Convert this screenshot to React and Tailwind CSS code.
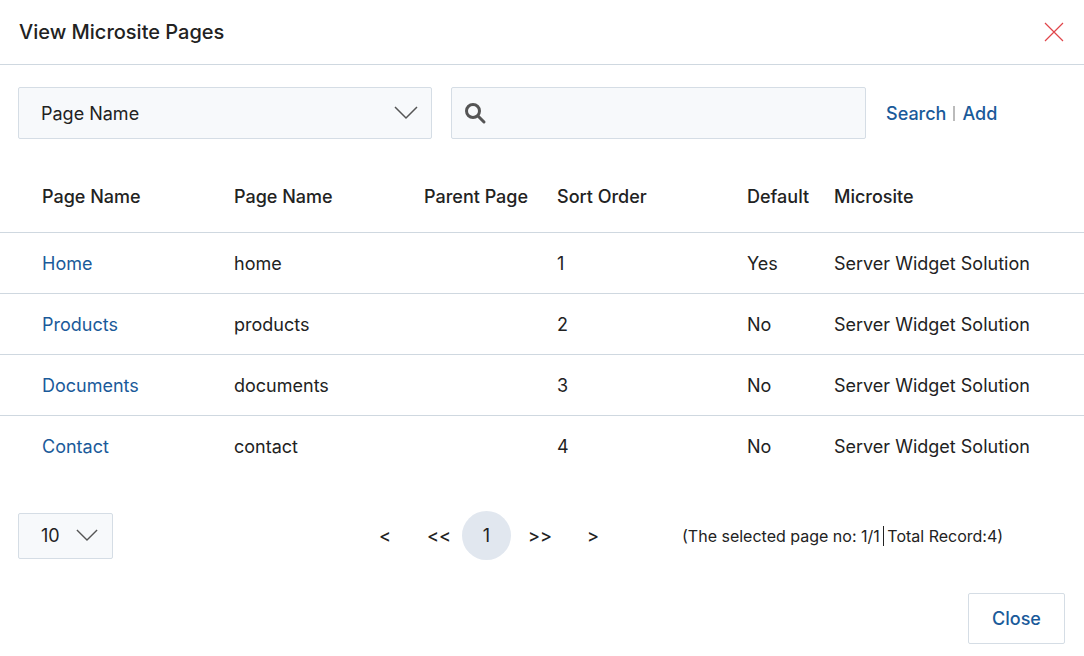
import React from "react";

const rows = [
  ["Home", "home", "1", "Yes"],
  ["Products", "products", "2", "No"],
  ["Documents", "documents", "3", "No"],
  ["Contact", "contact", "4", "No"],
];

const Chevron = ({ w = 24, h = 14 }) => (
  <svg width={w} height={h} viewBox="0 0 24 14" fill="none" stroke="#555" strokeWidth="1.5">
    <path d="M1 1l11 11L23 1" />
  </svg>
);

const grid = "grid grid-cols-[192px_190px_133px_190px_87px_1fr] pl-[42px] items-center";

export default function App() {
  return (
    <div className="w-[1084px] h-[656px] bg-white text-[#222] font-[family-name:Inter,sans-serif] flex flex-col">
      <div className="h-[65px] border-b border-[#cfd8e0] flex items-center justify-between pl-[19px] pr-[19px]">
        <span className="text-[20px] font-medium">View Microsite Pages</span>
        <svg width="22" height="22" viewBox="0 0 22 22" stroke="#e0454a" strokeWidth="1.2">
          <path d="M2 2l18 18M20 2L2 20" />
        </svg>
      </div>
      <div className="flex items-center mt-[22px] pl-[18px]">
        <div className="w-[414px] h-[52px] bg-[#f7f9fb] border border-[#d5dde5] rounded-[2px] flex items-center justify-between pl-[22px] pr-[13px] text-[18px]">
          <span>Page Name</span>
          <Chevron />
        </div>
        <div className="ml-[19px] w-[415px] h-[52px] bg-[#f7f9fb] border border-[#d5dde5] rounded-[2px] flex items-center pl-[11px]">
          <svg width="24" height="24" viewBox="0 0 24 24" fill="none" stroke="#555" strokeWidth="3">
            <circle cx="10" cy="10" r="6.5" />
            <path d="M15 15l6 6" strokeLinecap="round" />
          </svg>
        </div>
        <div className="ml-[20px] text-[18px] text-[#1a5a9a] font-medium flex items-center">
          <span>Search</span>
          <span className="mx-[7px] w-[2px] h-[15px] bg-[#bbb]"></span>
          <span>Add</span>
        </div>
      </div>
      <div className={grid + " h-[94px] pt-[22px] border-b border-[#cfd8e0] text-[18px] font-medium"}>
        <span>Page Name</span>
        <span>Page Name</span>
        <span>Parent Page</span>
        <span>Sort Order</span>
        <span>Default</span>
        <span>Microsite</span>
      </div>
      {rows.map((r, i) => (
        <div key={i} className={grid + " h-[61px] text-[18px]" + (i < 3 ? " border-b border-[#cfd8e0]" : "")}>
          <span className="text-[#1a5a9a]">{r[0]}</span>
          <span>{r[1]}</span>
          <span></span>
          <span>{r[2]}</span>
          <span>{r[3]}</span>
          <span>Server Widget Solution</span>
        </div>
      ))}
      <div className="flex items-center mt-[34px] pl-[18px]">
        <div className="w-[95px] h-[46px] bg-[#f7f9fb] border border-[#d5dde5] rounded-[2px] flex items-center justify-between pl-[22px] pr-[14px] text-[18px]">
          <span>10</span>
          <Chevron w={22} h={13} />
        </div>
        <div className="ml-[257px] flex items-center text-[18px] font-medium">
          <span className="w-[30px] text-center">&lt;</span>
          <span className="ml-[24px] w-[30px] text-center">&lt;&lt;</span>
          <span className="ml-[8px] w-[49px] h-[49px] rounded-full bg-[#e1e7ef] flex items-center justify-center font-normal">1</span>
          <span className="ml-[8px] w-[42px] text-center">&gt;&gt;</span>
          <span className="ml-[22px] w-[20px] text-center">&gt;</span>
        </div>
        <div className="ml-[79px] text-[16px] flex items-center">
          <span>(The selected page no: 1/1</span>
          <span className="mx-[3px] w-[1.5px] h-[20px] bg-[#222]"></span>
          <span>Total Record:4)</span>
        </div>
      </div>
      <div className="flex justify-end pr-[19px] mt-[33px]">
        <div className="w-[97px] h-[51px] border border-[#d5dde5] rounded-[2px] flex items-center justify-center text-[18px] font-medium text-[#1a5a9a]">
          Close
        </div>
      </div>
    </div>
  );
}
